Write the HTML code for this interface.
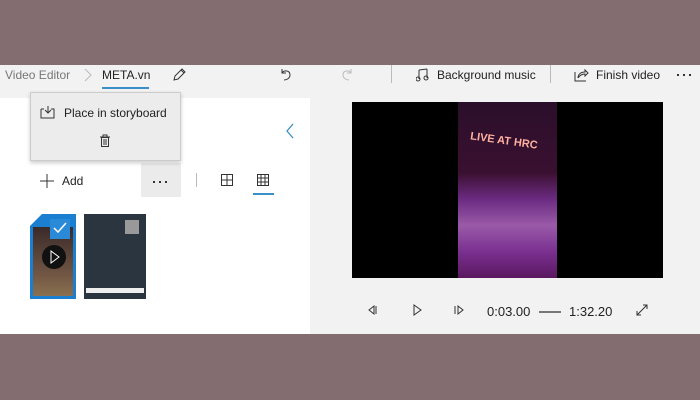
<!DOCTYPE html>
<html><head><meta charset="utf-8"><style>
*{margin:0;padding:0;box-sizing:border-box}
body{width:700px;height:400px;background:#836d70;font-family:"Liberation Sans",sans-serif;position:relative;overflow:hidden}
.app{position:absolute;left:0;top:65px;width:700px;height:269px;background:#f2f2f2}
.abs{position:absolute}
.t{position:absolute;font-size:12px;color:#222;white-space:nowrap}
.d{position:absolute;width:2px;height:2px;background:#333}
</style></head><body>
<div class="app">
  <div class="t" style="left:5px;top:3px;color:#777">Video Editor</div>
  <svg class="abs" style="left:84px;top:3px" width="8" height="14"><path d="M1 1l6 6-6 6" stroke="#bbb" fill="none"/></svg>
  <div class="t" style="left:102px;top:3px">META.vn</div>
  <div class="abs" style="left:102px;top:22px;width:47px;height:2px;background:#3a8fc8"></div>
  <svg class="abs" style="left:171px;top:2px" width="16" height="16"><path d="M3 13l1-4 7-7 3 3-7 7z M10 3l3 3" stroke="#333" fill="none"/></svg>
  <svg class="abs" style="left:279px;top:2px" width="14" height="14"><path d="M3 2v4h4 M3 6c2-3 8-3 8 2 0 3-3 5-6 5" stroke="#333" fill="none"/></svg>
  <svg class="abs" style="left:340px;top:2px" width="14" height="14"><path d="M11 2v4h-4 M11 6c-2-3-8-3-8 2 0 3 3 5 6 5" stroke="#bbb" fill="none"/></svg>
  <div class="abs" style="left:391px;top:0;width:1px;height:18px;background:#bbb"></div>
  <svg class="abs" style="left:416px;top:2px" width="14" height="15"><path d="M3 3v9 M11 2v9 M3 3l8-1" stroke="#333" fill="none"/><circle cx="2" cy="12" r="2" fill="none" stroke="#333"/><circle cx="10" cy="11" r="2" fill="none" stroke="#333"/></svg>
  <div class="t" style="left:437px;top:3px">Background music</div>
  <div class="abs" style="left:550px;top:0;width:1px;height:18px;background:#bbb"></div>
  <svg class="abs" style="left:573px;top:2px" width="16" height="15"><path d="M2 5v9h11 M5 11c0-4 3-6 7-6V3l3 3-3 3V7c-3 0-5 1-7 4" stroke="#333" fill="none"/></svg>
  <div class="t" style="left:596px;top:3px">Finish video</div>
  <div class="d" style="left:677px;top:9px"></div><div class="d" style="left:683px;top:9px"></div><div class="d" style="left:689px;top:9px"></div>

  <div class="abs" style="left:0;top:33px;width:310px;height:236px;background:#fff"></div>
  <svg class="abs" style="left:285px;top:58px" width="10" height="16"><path d="M8 1L2 8l6 7" stroke="#3a8fc8" fill="none" stroke-width="1.3"/></svg>
  <svg class="abs" style="left:40px;top:109px" width="14" height="14"><path d="M7 0v14 M0 7h14" stroke="#333" fill="none"/></svg>
  <div class="t" style="left:62px;top:109px;font-size:12px">Add</div>
  <div class="abs" style="left:141px;top:98px;width:40px;height:34px;background:#ebebeb"></div>
  <div class="d" style="left:153px;top:116px"></div><div class="d" style="left:159px;top:116px"></div><div class="d" style="left:165px;top:116px"></div>
  <div class="abs" style="left:196px;top:108px;width:1px;height:14px;background:#bbb"></div>
  <svg class="abs" style="left:221px;top:109px" width="12" height="12"><path d="M.5.5h11v11H.5z M6 0v12 M0 6h12" stroke="#333" fill="none"/></svg>
  <svg class="abs" style="left:257px;top:109px" width="12" height="12"><path d="M.5.5h11v11H.5z M4 0v12 M8 0v12 M0 4h12 M0 8h12" stroke="#333" fill="none"/></svg>
  <div class="abs" style="left:253px;top:128px;width:21px;height:2px;background:#3a8fc8"></div>

  <div class="abs" style="left:30px;top:149px;width:46px;height:85px;background:#1a7fd0;clip-path:polygon(12px 0,100% 0,100% 100%,0 100%,0 12px)"></div>
  <div class="abs" style="left:33px;top:162px;width:40px;height:69px;background:linear-gradient(#3a2a2a,#6a5040 60%,#8a7050)"></div>
  <div class="abs" style="left:50px;top:154px;width:20px;height:20px;background:#2a8ad8"></div>
  <svg class="abs" style="left:52px;top:156px" width="16" height="14"><path d="M2 7l4 4 8-9" stroke="#fff" fill="none" stroke-width="1.5"/></svg>
  <div class="abs" style="left:42px;top:180px;width:24px;height:24px;border-radius:50%;background:#111"></div>
  <svg class="abs" style="left:49px;top:185px" width="12" height="14"><path d="M2 1l8 6-8 6z" stroke="#fff" fill="none"/></svg>
  <div class="abs" style="left:84px;top:149px;width:62px;height:85px;background:#2a3540"></div>
  <div class="abs" style="left:125px;top:155px;width:14px;height:14px;background:#999"></div>
  <div class="abs" style="left:86px;top:223px;width:58px;height:5px;background:#eee"></div>

  <div class="abs" style="left:352px;top:37px;width:311px;height:176px;background:#000"></div>
  <div class="abs" style="left:458px;top:37px;width:99px;height:176px;background:linear-gradient(#2a0f2a 0%,#3a1030 40%,#6a2a80 55%,#9a5aa8 70%,#7a3090 85%,#5a1860)"></div>
  <div class="t" style="left:470px;top:70px;color:#ffb0a0;font-weight:bold;font-size:11px;transform:rotate(8deg)">LIVE AT HRC</div>

  <svg class="abs" style="left:366px;top:239px" width="12" height="12"><path d="M8 2L3 6l5 4z M10 2v8" stroke="#333" fill="none"/></svg>
  <svg class="abs" style="left:411px;top:239px" width="12" height="12"><path d="M3 1l7 5-7 5z" stroke="#333" fill="none"/></svg>
  <svg class="abs" style="left:453px;top:239px" width="12" height="12"><path d="M5 2l5 4-5 4z M2 2v8" stroke="#333" fill="none"/></svg>
  <div class="t" style="left:487px;top:239px;font-size:13px">0:03.00</div>
  <div class="abs" style="left:539px;top:246px;width:22px;height:2px;background:#777"></div>
  <div class="t" style="left:569px;top:239px;font-size:13px">1:32.20</div>
  <svg class="abs" style="left:635px;top:238px" width="14" height="14"><path d="M2 12l10-10 M8 2h4v4 M2 8v4h4" stroke="#333" fill="none"/></svg>

  <div class="abs" style="left:30px;top:27px;width:151px;height:69px;background:#ececec;border:1px solid #ccc;box-shadow:0 2px 4px rgba(0,0,0,.2)"></div>
  <svg class="abs" style="left:40px;top:40px" width="16" height="14"><path d="M1 4v9h13V4h-3 M4 4H1 M8 1v7 M5 5l3 3 3-3" stroke="#333" fill="none"/></svg>
  <div class="t" style="left:64px;top:41px">Place in storyboard</div>
  <svg class="abs" style="left:99px;top:69px" width="12" height="14"><path d="M1 3h10 M4 3V1h4v2 M2.5 3.5h7v9h-7z M5 5v6 M7 5v6" stroke="#333" fill="none"/></svg>
</div>
</body></html>
